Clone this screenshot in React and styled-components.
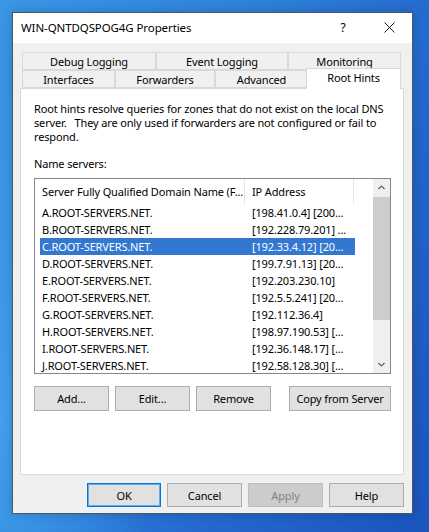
import React from 'react'
import styled, { createGlobalStyle } from 'styled-components'

const GlobalStyle = createGlobalStyle`
  html, body {
    margin: 0;
    padding: 0;
  }
  body {
    width: 429px;
    height: 532px;
    overflow: hidden;
    font-family: "Noto Sans", "Open Sans", sans-serif;
    font-size: 11px;
    letter-spacing: -0.15px;
    color: #000;
    background:
      radial-gradient(ellipse 220px 500px at 0px 420px, rgba(80, 180, 250, 0.55), transparent 70%),
      linear-gradient(115deg, #3a97e6 0%, #2d80d9 40%, #2366cc 70%, #1b54bd 100%);
  }
`

const tabsTop = [
  { label: 'Debug Logging', w: 134 },
  { label: 'Event Logging', w: 132 },
  { label: 'Monitoring', w: 113 },
]

const tabsBottom = [
  { label: 'Interfaces', w: 93 },
  { label: 'Forwarders', w: 100 },
  { label: 'Advanced', w: 93 },
  { label: 'Root Hints', w: 95, active: true },
]

const servers = [
  ['A.ROOT-SERVERS.NET.', '[198.41.0.4] [200...'],
  ['B.ROOT-SERVERS.NET.', '[192.228.79.201] ...'],
  ['C.ROOT-SERVERS.NET.', '[192.33.4.12] [20...'],
  ['D.ROOT-SERVERS.NET.', '[199.7.91.13] [20...'],
  ['E.ROOT-SERVERS.NET.', '[192.203.230.10]'],
  ['F.ROOT-SERVERS.NET.', '[192.5.5.241] [20...'],
  ['G.ROOT-SERVERS.NET.', '[192.112.36.4]'],
  ['H.ROOT-SERVERS.NET.', '[198.97.190.53] [...'],
  ['I.ROOT-SERVERS.NET.', '[192.36.148.17] [...'],
  ['J.ROOT-SERVERS.NET.', '[192.58.128.30] [...'],
]

const App = () => {
  return (
    <Page>
      <GlobalStyle />
      <Window>
        <TitleBar>
          <Title>WIN-QNTDQSPOG4G Properties</Title>
          <HelpGlyph>?</HelpGlyph>
          <CloseBtn>
            <svg width="11" height="11" viewBox="0 0 11 11">
              <path d="M0.5 0.5 L10.5 10.5 M10.5 0.5 L0.5 10.5" stroke="#1a1a1a" strokeWidth="1" fill="none" />
            </svg>
          </CloseBtn>
        </TitleBar>

        <Body>
          <Tabs>
            <TabRow>
              {tabsTop.map((t) => (
                <Tab key={t.label} $w={t.w}>{t.label}</Tab>
              ))}
            </TabRow>
            <TabRow>
              {tabsBottom.map((t) => (
                <Tab key={t.label} $w={t.w} $active={t.active}>{t.label}</Tab>
              ))}
            </TabRow>
          </Tabs>

          <Panel>
            <Intro>
              <span>Root hints resolve queries for zones that do not exist on the local DNS</span>
              <span>server.   They are only used if forwarders are not configured or fail to</span>
              <span>respond.</span>
            </Intro>

            <Label>Name servers:</Label>

            <ListBox>
              <ListMain>
                <Header>
                  <HeadCell $w={210}>Server Fully Qualified Domain Name (F...</HeadCell>
                  <HeadCell $w={109}>IP Address</HeadCell>
                  <HeadCell $w={18} />
                </Header>
                {servers.map(([name, ip], i) => (
                  <Row key={name} $selected={i === 2}>
                    <Cell $w={205} $pad={2}>{name}</Cell>
                    <Cell $w={110} $pad={7}>{ip}</Cell>
                  </Row>
                ))}
              </ListMain>
              <ScrollBar>
                <ScrollArrow>
                  <svg width="7" height="5" viewBox="0 0 7 5">
                    <path d="M0.5 4 L3.5 1 L6.5 4" stroke="#606060" strokeWidth="1.2" fill="none" />
                  </svg>
                </ScrollArrow>
                <Track>
                  <Thumb />
                </Track>
                <ScrollArrow>
                  <svg width="7" height="5" viewBox="0 0 7 5">
                    <path d="M0.5 1 L3.5 4 L6.5 1" stroke="#606060" strokeWidth="1.2" fill="none" />
                  </svg>
                </ScrollArrow>
              </ScrollBar>
            </ListBox>

            <ActionRow>
              <Button $w={75}>Add...</Button>
              <Button $w={75}>Edit...</Button>
              <Button $w={75}>Remove</Button>
              <Button $w={102} $push>Copy from Server</Button>
            </ActionRow>
          </Panel>

          <DialogButtons>
            <Button $w={74} $h={24} $default>OK</Button>
            <Button $w={75} $h={24}>Cancel</Button>
            <Button $w={75} $h={24} disabled>Apply</Button>
            <Button $w={75} $h={24}>Help</Button>
          </DialogButtons>
        </Body>
      </Window>
    </Page>
  )
}

const Page = styled.div`
  padding: 12px 0 0 12px;
`

const Window = styled.div`
  width: 399px;
  border: 1px solid #4a5866;
  background: #f0f0f0;
  box-shadow: 0 0 10px rgba(0, 0, 0, 0.18);
`

const TitleBar = styled.div`
  height: 30px;
  background: #fff;
  display: flex;
  align-items: center;
  padding-left: 8px;
`

const Title = styled.div`
  flex: 1;
  font-size: 11.5px;
  letter-spacing: -0.1px;
  color: #000;
  padding-bottom: 2px;
`

const HelpGlyph = styled.div`
  width: 46px;
  text-align: center;
  font-size: 12px;
  padding-bottom: 2px;
`

const CloseBtn = styled.div`
  width: 46px;
  height: 30px;
  display: flex;
  align-items: center;
  justify-content: center;
  padding-bottom: 2px;
  box-sizing: border-box;
`

const Body = styled.div`
  padding: 9px 8px 6px 7px;
`

const Tabs = styled.div`
  display: flex;
  flex-direction: column;
  height: 36px;
`

const TabRow = styled.div`
  display: flex;
  height: 18px;
  padding: 0 2px;
`

const Tab = styled.div`
  width: ${(p) => p.$w}px;
  flex: none;
  box-sizing: border-box;
  height: ${(p) => (p.$active ? '21px' : '18px')};
  margin-top: ${(p) => (p.$active ? '-2px' : '0')};
  margin-left: ${(p) => (p.$active ? '-2px' : '0')};
  margin-right: ${(p) => (p.$active ? '-2px' : '0')};
  background: ${(p) => (p.$active ? '#fff' : '#f0f0f0')};
  border: 1px solid #d9d9d9;
  border-bottom: ${(p) => (p.$active ? 'none' : '1px solid #d9d9d9')};
  & + & {
    border-left: ${(p) => (p.$active ? '1px solid #d9d9d9' : 'none')};
  }
  display: flex;
  justify-content: center;
  align-items: ${(p) => (p.$active ? 'flex-start' : 'center')};
  padding-top: ${(p) => (p.$active ? '1px' : '0')};
  font-size: 11px;
  line-height: 15px;
  position: relative;
  z-index: ${(p) => (p.$active ? 2 : 1)};
  white-space: nowrap;
`

const Panel = styled.div`
  height: 387px;
  box-sizing: border-box;
  background: #fff;
  border: 1px solid #d9d9d9;
  padding: 13px 11px 0 13px;
  display: flex;
  flex-direction: column;
`

const Intro = styled.div`
  line-height: 14px;
  span {
    display: block;
    white-space: pre;
  }
`

const Label = styled.div`
  margin-top: 13px;
  line-height: 14px;
`

const ListBox = styled.div`
  margin-top: 7px;
  width: 357px;
  height: 196px;
  box-sizing: border-box;
  border: 1px solid #828790;
  display: flex;
  overflow: hidden;
`

const ListMain = styled.div`
  flex: 1;
  overflow: hidden;
`

const Header = styled.div`
  display: flex;
  height: 25px;
`

const HeadCell = styled.div`
  width: ${(p) => p.$w}px;
  flex: none;
  box-sizing: border-box;
  padding-left: 7px;
  display: flex;
  align-items: center;
  border-right: 1px solid #e5e5e5;
  white-space: nowrap;
  &:last-child {
    border-right: none;
  }
`

const Row = styled.div`
  display: flex;
  height: 17px;
  margin-left: 5px;
  width: 315px;
  background: ${(p) => (p.$selected ? '#3378d0' : 'transparent')};
  color: ${(p) => (p.$selected ? '#fff' : '#000')};
`

const Cell = styled.div`
  width: ${(p) => p.$w}px;
  flex: none;
  box-sizing: border-box;
  padding-left: ${(p) => p.$pad}px;
  line-height: 17px;
  white-space: nowrap;
`

const ScrollBar = styled.div`
  width: 17px;
  flex: none;
  background: #f0f0f0;
  display: flex;
  flex-direction: column;
`

const ScrollArrow = styled.div`
  height: 17px;
  flex: none;
  display: flex;
  align-items: center;
  justify-content: center;
`

const Track = styled.div`
  flex: 1;
  padding-top: 1px;
`

const Thumb = styled.div`
  height: 123px;
  background: #cdcdcd;
`

const ActionRow = styled.div`
  margin-top: 12px;
  width: 357px;
  display: flex;
  gap: 6px;
`

const Button = styled.button`
  width: ${(p) => p.$w}px;
  height: ${(p) => p.$h || 25}px;
  margin-left: ${(p) => (p.$push ? 'auto' : '0')};
  box-sizing: border-box;
  font-family: "Noto Sans", "Open Sans", sans-serif;
  font-size: 11px;
  letter-spacing: -0.15px;
  color: #000;
  background: #e1e1e1;
  border: 1px solid ${(p) => (p.$default ? '#0078d7' : '#adadad')};
  box-shadow: ${(p) => (p.$default ? 'inset 0 0 0 1px #6aaae6' : 'none')};
  padding: 0;
  &:disabled {
    background: #cccccc;
    border-color: #bfbfbf;
    color: #838383;
  }
`

const DialogButtons = styled.div`
  display: flex;
  justify-content: flex-end;
  gap: 6px;
  margin-top: 8px;
`

export default App
